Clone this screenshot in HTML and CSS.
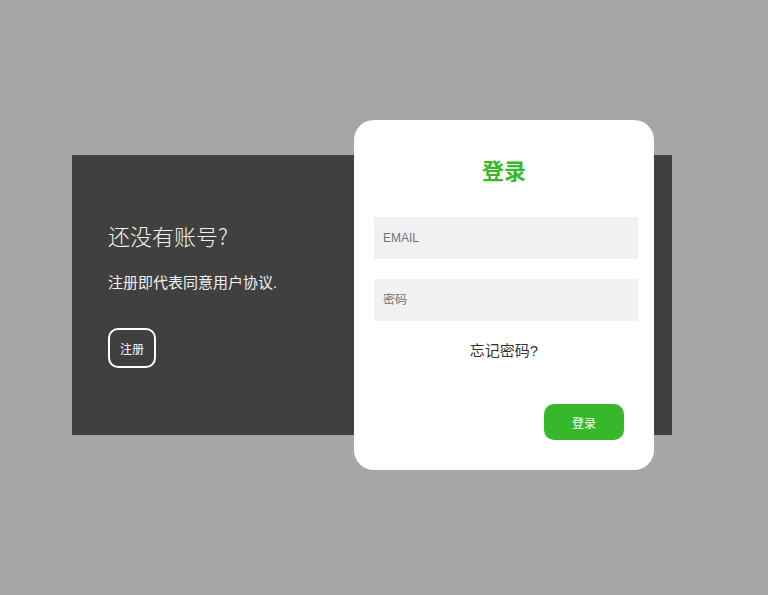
FILE: index.html
```html
<!DOCTYPE html>
<html lang="zh-CN">
<head>
<meta charset="utf-8">
<title>登录</title>
<link rel="stylesheet" href="styles.css">
</head>
<body>
<div class="panel">
  <div class="intro">
    <h2 class="intro-title">还没有账号?</h2>
    <p class="intro-text">注册即代表同意用户协议.</p>
    <button class="btn-outline">注册</button>
  </div>
  <div class="card">
    <h1 class="card-title">登录</h1>
    <div class="field">EMAIL</div>
    <div class="field">密码</div>
    <div class="forgot">忘记密码?</div>
    <div class="actions"><button class="btn-green">登录</button></div>
  </div>
</div>
</body>
</html>
```

FILE: styles.css
```css
html, body {
  margin: 0;
  padding: 0;
}
body {
  background: #a6a6a6;
  width: 768px;
  height: 595px;
  overflow: hidden;
  font-family: "Liberation Sans", "Noto Sans CJK SC", sans-serif;
}
.panel {
  position: relative;
  margin: 155px 0 0 72px;
  width: 600px;
  height: 280px;
  background: #404040;
}
.intro {
  padding: 65px 0 0 36px;
  color: #f2f2f2;
}
.intro-title {
  margin: 0;
  font-family: "Noto Sans CJK SC", sans-serif;
  font-size: 22px;
  line-height: 30px;
  font-weight: 300;
}
.intro-text {
  margin: 23px 0 0 0;
  font-size: 15px;
  line-height: 20px;
}
.btn-outline {
  margin-top: 35px;
  width: 48px;
  height: 40px;
  border: 2px solid #ffffff;
  border-radius: 10px;
  background: transparent;
  color: #ffffff;
  font-family: "Liberation Sans", "Noto Sans CJK SC", sans-serif;
  font-size: 12px;
  padding: 0;
}
.card {
  position: absolute;
  left: 282px;
  top: -35px;
  width: 300px;
  height: 350px;
  background: #ffffff;
  border-radius: 20px;
  box-sizing: border-box;
  padding-top: 36px;
}
.card-title {
  margin: 0;
  text-align: center;
  color: #3ab82b;
  font-size: 22px;
  line-height: 32px;
  font-weight: 700;
}
.field {
  margin: 29px 0 0 20px;
  width: 264px;
  height: 42px;
  box-sizing: border-box;
  background: #f1f1f1;
  padding-left: 9px;
  line-height: 42px;
  font-size: 12px;
  color: #707479;
}
.field + .field {
  margin-top: 20px;
}
.forgot {
  margin-top: 20px;
  text-align: center;
  font-size: 15px;
  line-height: 20px;
  color: #333333;
}
.actions {
  display: flex;
  justify-content: flex-end;
  margin-top: 43px;
  padding-right: 30px;
}
.btn-green {
  width: 80px;
  height: 36px;
  border: none;
  border-radius: 10px;
  background: #37b82b;
  color: #ffffff;
  font-family: "Liberation Sans", "Noto Sans CJK SC", sans-serif;
  font-size: 12px;
  padding: 0;
}
```
